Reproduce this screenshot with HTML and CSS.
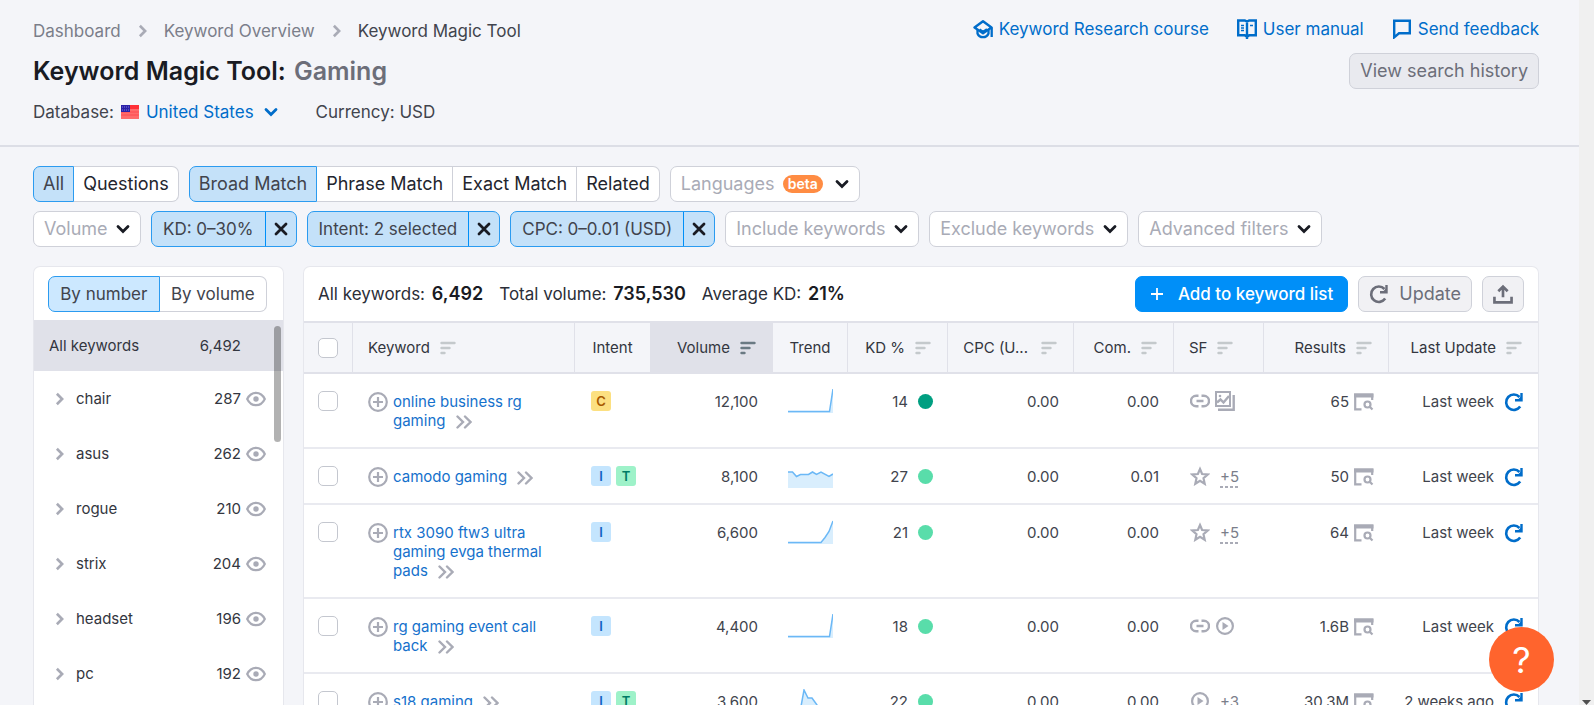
FILE: index.html
```html
<!DOCTYPE html>
<html lang="en">
<head>
<meta charset="utf-8">
<meta name="viewport" content="width=device-width, initial-scale=1">
<title>Keyword Magic Tool: Gaming</title>
<link rel="stylesheet" href="styles.css">
</head>
<body>
<svg class="sprite" aria-hidden="true">
  <symbol id="chev-right" viewBox="0 0 10 16"><path d="M2 2l6 6-6 6" fill="none" stroke="currentColor" stroke-width="3"/></symbol>
  <symbol id="chev-down" viewBox="0 0 14 10"><path d="M2 2.5l5 5 5-5" fill="none" stroke="currentColor" stroke-width="2.8" stroke-linecap="round"/></symbol>
  <symbol id="double" viewBox="0 0 16 14"><path d="M1.500 1.500L7 7l-5.500 5.500M9 1.500L14.500 7 9 12.500" fill="none" stroke="currentColor" stroke-width="2.400" stroke-linecap="round"/></symbol>
  <symbol id="close" viewBox="0 0 14 14"><path d="M2 2l10 10M12 2L2 12" stroke="currentColor" stroke-width="2.8" stroke-linecap="round"/></symbol>
  <symbol id="sort" viewBox="0 0 16 14"><path d="M1.500 2h13M1.500 7h8M1.500 12h3" stroke="currentColor" stroke-width="2.400" stroke-linecap="round"/></symbol>
  <symbol id="plus-circle" viewBox="0 0 20 20"><g fill="none" stroke="currentColor" stroke-width="2.200"><circle cx="10" cy="10" r="8.800"/><path d="M10 5v10M5 10h10"/></g></symbol>
  <symbol id="eye" viewBox="0 0 20 16"><path d="M1.200 8C3 4.200 6.200 1.800 10 1.800s7 2.400 8.800 6.200C17 11.800 13.800 14.200 10 14.200S3 11.800 1.200 8z" fill="none" stroke="currentColor" stroke-width="2.200"/><circle cx="10" cy="8" r="2.700" fill="currentColor"/></symbol>
  <symbol id="link" viewBox="0 0 20 14"><path d="M8.500 1.800H6.200a5.200 5.200 0 0 0 0 10.400h2.300M11.500 1.800h2.300a5.200 5.200 0 0 1 0 10.400h-2.300M6.500 7h7" fill="none" stroke="currentColor" stroke-width="2.400"/></symbol>
  <symbol id="images" viewBox="0 0 20 20"><path d="M0 0h16v16H0zM2 2v12h12V2z" fill="currentColor" fill-rule="evenodd"/><path d="M2 11.500l3.500-3 3 3L14 5" fill="none" stroke="currentColor" stroke-width="2.400"/><circle cx="5" cy="5" r="1.300" fill="currentColor"/><path d="M18.700 4v14.700H3" fill="none" stroke="currentColor" stroke-width="2.400"/></symbol>
  <symbol id="star" viewBox="0 0 20 20"><path d="M10 3l2.100 5 5.600.5-4.200 3.700 1.200 5.600-4.700-3-4.700 3 1.200-5.600-4.200-3.700 5.600-.5z" fill="none" stroke="currentColor" stroke-width="2.200"/></symbol>
  <symbol id="play" viewBox="0 0 20 20"><circle cx="10" cy="10" r="7.900" fill="none" stroke="currentColor" stroke-width="2.200"/><path d="M7.500 6v8l6-4z" fill="currentColor"/></symbol>
  <symbol id="serp" viewBox="0 0 20 18"><path d="M7.500 16.300H1.200V1.500h17V7" fill="none" stroke="currentColor" stroke-width="2.200"/><path d="M0 .5h19.500v4H0z" fill="currentColor"/><circle cx="13.500" cy="11.500" r="3" fill="none" stroke="currentColor" stroke-width="2.200"/><path d="M15.500 13.500l3 3" stroke="currentColor" stroke-width="2.200"/></symbol>
  <symbol id="refresh" viewBox="0 0 20 20"><path d="M16.200 14.600A7.700 7.700 0 1 1 15.500 5" fill="none" stroke="currentColor" stroke-width="2.600"/><path d="M17.500 1v7.200H11" fill="none" stroke="currentColor" stroke-width="2.400"/><path d="M18 3.500v4.500h-4.500z" fill="currentColor"/></symbol>
  <symbol id="cap" viewBox="0 0 20 20"><path d="M1.500 8.500L10 2.300l8.500 6.200L10 14.200z" fill="none" stroke="currentColor" stroke-width="2.400" stroke-linejoin="round"/><path d="M4.500 11v3.500C5.500 17 7.500 18.200 10 18.200s4.500-1.200 5.500-3.700V11M6.500 10.500L10 13l4-2.700M18.700 8.500V18" fill="none" stroke="currentColor" stroke-width="2.300"/></symbol>
  <symbol id="book" viewBox="0 0 20 20"><path d="M1.200 1.500h6.600L10 2.600l2.200-1.100h6.600v14.800h-6.600L10 18l-2.200-1.700H1.200zM10 2.500V20" fill="none" stroke="currentColor" stroke-width="2.400"/><path d="M4 6.500h3M4 9h3M4 11.500h3M13 6.500h3" stroke="currentColor" stroke-width="1.600"/></symbol>
  <symbol id="chat" viewBox="0 0 18 20"><path d="M1.200 1.700h15.600v12.600H6l-4.800 4z" fill="none" stroke="currentColor" stroke-width="2.400"/></symbol>
  <symbol id="export" viewBox="0 0 18 18"><path d="M9 12V2.500M4.800 6.500L9 2.300l4.200 4.200M1.300 11.500v5h15.400v-5" fill="none" stroke="currentColor" stroke-width="2.400"/></symbol>
</svg>

<div class="app">
<div class="page">
  <header class="header">
    <div class="header-main">
      <nav class="crumbs" aria-label="Breadcrumb">
        <a href="#">Dashboard</a>
        <svg class="i-crumb"><use href="#chev-right"/></svg>
        <a href="#">Keyword Overview</a>
        <svg class="i-crumb"><use href="#chev-right"/></svg>
        <span class="current">Keyword Magic Tool</span>
      </nav>
      <h1 class="title">Keyword Magic Tool: <span class="query">Gaming</span></h1>
      <div class="meta">
        <span class="database">Database:
          <svg class="flag" viewBox="0 0 18 14" aria-hidden="true"><path d="M0 0h18v14H0z" fill="#ff6b6b"/><path d="M0 0h18v4H0z" fill="#ff3038"/><path d="M0 7h18M0 10h18" stroke="#ff4a50"/><path d="M0 0h9v7H0z" fill="#2a20a8"/><path d="M1 2h7M1 5h7" stroke="#7f78d8" stroke-dasharray="1 1"/></svg>
          <button class="country" type="button">United States <svg class="i-down"><use href="#chev-down"/></svg></button>
        </span>
        <span>Currency: USD</span>
      </div>
    </div>
    <div class="header-side">
      <nav class="help-links" aria-label="Help">
        <a href="#"><svg class="i-20"><use href="#cap"/></svg>Keyword Research course</a>
        <a href="#"><svg class="i-20"><use href="#book"/></svg>User manual</a>
        <a href="#"><svg class="i-20"><use href="#chat"/></svg>Send feedback</a>
      </nav>
      <button class="btn history" type="button">View search history</button>
    </div>
  </header>

  <main class="content">
    <section class="filters" aria-label="Filters">
      <div class="filter-row">
        <div class="segmented"><button type="button" aria-pressed="true">All</button><button type="button" aria-pressed="false">Questions</button></div>
        <div class="segmented"><button type="button" aria-pressed="true">Broad Match</button><button type="button" aria-pressed="false">Phrase Match</button><button type="button" aria-pressed="false">Exact Match</button><button type="button" aria-pressed="false">Related</button></div>
        <label class="dropdown"><select aria-label="Languages"><option>Languages</option></select><span class="beta">beta</span><svg class="i-down"><use href="#chev-down"/></svg></label>
      </div>
      <div class="filter-row">
        <label class="dropdown"><select aria-label="Volume"><option>Volume</option></select><svg class="i-down"><use href="#chev-down"/></svg></label>
        <div class="chip"><button type="button">KD: 0–30%</button><button class="clear" type="button" aria-label="Clear KD"><svg class="i-14"><use href="#close"/></svg></button></div>
        <div class="chip"><button type="button">Intent: 2 selected</button><button class="clear" type="button" aria-label="Clear intent"><svg class="i-14"><use href="#close"/></svg></button></div>
        <div class="chip"><button type="button">CPC: 0–0.01 (USD)</button><button class="clear" type="button" aria-label="Clear CPC"><svg class="i-14"><use href="#close"/></svg></button></div>
        <label class="dropdown"><select aria-label="Include keywords"><option>Include keywords</option></select><svg class="i-down"><use href="#chev-down"/></svg></label>
        <label class="dropdown"><select aria-label="Exclude keywords"><option>Exclude keywords</option></select><svg class="i-down"><use href="#chev-down"/></svg></label>
        <label class="dropdown"><select aria-label="Advanced filters"><option>Advanced filters</option></select><svg class="i-down"><use href="#chev-down"/></svg></label>
      </div>
    </section>

    <div class="panels">
      <aside class="card groups">
        <div class="groups-head">
          <div class="segmented fill"><button type="button" aria-pressed="true">By number</button><button type="button" aria-pressed="false">By volume</button></div>
        </div>
        <a class="group all" href="#"><span class="name">All keywords</span><span>6,492</span></a>
        <ul class="group-list">
          <li class="group"><svg class="i-arrow"><use href="#chev-right"/></svg><a class="name" href="#">chair</a><span>287</span><svg class="i-eye"><use href="#eye"/></svg></li>
          <li class="group"><svg class="i-arrow"><use href="#chev-right"/></svg><a class="name" href="#">asus</a><span>262</span><svg class="i-eye"><use href="#eye"/></svg></li>
          <li class="group"><svg class="i-arrow"><use href="#chev-right"/></svg><a class="name" href="#">rogue</a><span>210</span><svg class="i-eye"><use href="#eye"/></svg></li>
          <li class="group"><svg class="i-arrow"><use href="#chev-right"/></svg><a class="name" href="#">strix</a><span>204</span><svg class="i-eye"><use href="#eye"/></svg></li>
          <li class="group"><svg class="i-arrow"><use href="#chev-right"/></svg><a class="name" href="#">headset</a><span>196</span><svg class="i-eye"><use href="#eye"/></svg></li>
          <li class="group"><svg class="i-arrow"><use href="#chev-right"/></svg><a class="name" href="#">pc</a><span>192</span><svg class="i-eye"><use href="#eye"/></svg></li>
        </ul>
        <div class="thumb"></div>
      </aside>

      <section class="card results">
        <div class="toolbar">
          <span>All keywords: <b>6,492</b></span>
          <span>Total volume: <b>735,530</b></span>
          <span>Average KD: <b>21%</b></span>
          <div class="actions">
            <button class="btn primary" type="button"><svg class="i-14" viewBox="0 0 14 14"><path d="M7 1v12M1 7h12" stroke="currentColor" stroke-width="1.800"/></svg>Add to keyword list</button>
            <button class="btn" type="button"><svg class="i-20"><use href="#refresh"/></svg>Update</button>
            <button class="btn" type="button" aria-label="Export"><svg class="i-20"><use href="#export"/></svg></button>
          </div>
        </div>
        <table class="grid">
          <colgroup><col class="c-check"><col><col class="c-75"><col class="c-123"><col class="c-75"><col class="c-100"><col class="c-126"><col class="c-100"><col class="c-90"><col class="c-125"><col class="c-last"></colgroup>
          <thead>
            <tr>
              <th class="check"><input type="checkbox" aria-label="Select all"></th>
              <th><span class="h">Keyword <svg class="i-sort"><use href="#sort"/></svg></span></th>
              <th class="center plain">Intent</th>
              <th class="sorted end"><span class="h">Volume <svg class="i-sort"><use href="#sort"/></svg></span></th>
              <th class="center">Trend</th>
              <th class="end"><span class="h">KD % <svg class="i-sort"><use href="#sort"/></svg></span></th>
              <th class="end"><span class="h">CPC (U... <svg class="i-sort wide"><use href="#sort"/></svg></span></th>
              <th class="end"><span class="h">Com. <svg class="i-sort"><use href="#sort"/></svg></span></th>
              <th><span class="h">SF <svg class="i-sort"><use href="#sort"/></svg></span></th>
              <th class="end"><span class="h">Results <svg class="i-sort"><use href="#sort"/></svg></span></th>
              <th class="end"><span class="h">Last Update <svg class="i-sort"><use href="#sort"/></svg></span></th>
            </tr>
          </thead>
          <tbody>
            <tr>
              <td class="check"><input type="checkbox" aria-label="Select online business rg gaming"></td>
              <td><div class="kw"><svg class="i-20"><use href="#plus-circle"/></svg><a href="#">online business rg gaming <svg class="i-double"><use href="#double"/></svg></a></div></td>
              <td class="icons"><span class="row"><b class="intent c">C</b></span></td>
              <td class="num">12,100</td>
              <td class="trend"><svg viewBox="0 0 45 24"><path class="area" d="M0 23h41.500L45 0v24H0z"/><path class="line" d="M0 22.500h41.500L45 0"/></svg></td>
              <td class="num"><span class="kd">14<i class="dot dark"></i></span></td>
              <td class="num">0.00</td><td class="num">0.00</td>
              <td class="icons"><span class="row"><svg class="i-link"><use href="#link"/></svg><svg class="i-20"><use href="#images"/></svg></span></td>
              <td class="num"><span class="res">65<svg class="i-serp"><use href="#serp"/></svg></span></td>
              <td class="num"><span class="upd">Last week<svg class="i-20"><use href="#refresh"/></svg></span></td>
            </tr>
            <tr>
              <td class="check"><input type="checkbox" aria-label="Select camodo gaming"></td>
              <td><div class="kw"><svg class="i-20"><use href="#plus-circle"/></svg><a href="#">camodo gaming <svg class="i-double"><use href="#double"/></svg></a></div></td>
              <td class="icons"><span class="row"><b class="intent i">I</b><b class="intent t">T</b></span></td>
              <td class="num">8,100</td>
              <td class="trend"><svg viewBox="0 0 45 24"><path class="area" d="M0 8h4.500L8.500 12.500l4-2h8L24.500 8l4 2.500L33 8l8 4.500 4-2.500v14H0z"/><path class="line" d="M0 8h4.500L8.500 12.500l4-2h8L24.500 8l4 2.500L33 8l8 4.500 4-2.500"/></svg></td>
              <td class="num"><span class="kd">27<i class="dot"></i></span></td>
              <td class="num">0.00</td><td class="num">0.01</td>
              <td class="icons"><span class="row"><svg class="i-20"><use href="#star"/></svg><a class="more" href="#">+5</a></span></td>
              <td class="num"><span class="res">50<svg class="i-serp"><use href="#serp"/></svg></span></td>
              <td class="num"><span class="upd">Last week<svg class="i-20"><use href="#refresh"/></svg></span></td>
            </tr>
            <tr>
              <td class="check"><input type="checkbox" aria-label="Select rtx 3090 ftw3 ultra gaming evga thermal pads"></td>
              <td><div class="kw"><svg class="i-20"><use href="#plus-circle"/></svg><a href="#">rtx 3090 ftw3 ultra gaming evga thermal pads <svg class="i-double"><use href="#double"/></svg></a></div></td>
              <td class="icons"><span class="row"><b class="intent i">I</b></span></td>
              <td class="num">6,600</td>
              <td class="trend"><svg viewBox="0 0 45 24"><path class="area" d="M0 23h33l4-5 4-6L45 1v23H0z"/><path class="line" d="M0 22.500h33l4-5 4-6L45 1"/></svg></td>
              <td class="num"><span class="kd">21<i class="dot"></i></span></td>
              <td class="num">0.00</td><td class="num">0.00</td>
              <td class="icons"><span class="row"><svg class="i-20"><use href="#star"/></svg><a class="more" href="#">+5</a></span></td>
              <td class="num"><span class="res">64<svg class="i-serp"><use href="#serp"/></svg></span></td>
              <td class="num"><span class="upd">Last week<svg class="i-20"><use href="#refresh"/></svg></span></td>
            </tr>
            <tr>
              <td class="check"><input type="checkbox" aria-label="Select rg gaming event call back"></td>
              <td><div class="kw"><svg class="i-20"><use href="#plus-circle"/></svg><a href="#">rg gaming event call back <svg class="i-double"><use href="#double"/></svg></a></div></td>
              <td class="icons"><span class="row"><b class="intent i">I</b></span></td>
              <td class="num">4,400</td>
              <td class="trend"><svg viewBox="0 0 45 24"><path class="area" d="M0 23h41.500L45 0v24H0z"/><path class="line" d="M0 22.500h41.500L45 0"/></svg></td>
              <td class="num"><span class="kd">18<i class="dot"></i></span></td>
              <td class="num">0.00</td><td class="num">0.00</td>
              <td class="icons"><span class="row"><svg class="i-link"><use href="#link"/></svg><svg class="i-20"><use href="#play"/></svg></span></td>
              <td class="num"><span class="res">1.6B<svg class="i-serp"><use href="#serp"/></svg></span></td>
              <td class="num"><span class="upd">Last week<svg class="i-20"><use href="#refresh"/></svg></span></td>
            </tr>
            <tr>
              <td class="check"><input type="checkbox" aria-label="Select s18 gaming"></td>
              <td><div class="kw"><svg class="i-20"><use href="#plus-circle"/></svg><a href="#">s18 gaming <svg class="i-double"><use href="#double"/></svg></a></div></td>
              <td class="icons"><span class="row"><b class="intent i">I</b><b class="intent t">T</b></span></td>
              <td class="num">3,600</td>
              <td class="trend"><svg viewBox="0 0 45 24"><path class="area" d="M12 23L16 1l4 8h4l5 7 4 5 12 2v1H0v-1z"/><path class="line" d="M0 23h12L16 1l4 8h4l5 7 4 5 12 2"/></svg></td>
              <td class="num"><span class="kd">22<i class="dot"></i></span></td>
              <td class="num">0.00</td><td class="num">0.00</td>
              <td class="icons"><span class="row"><svg class="i-20"><use href="#play"/></svg><a class="more" href="#">+3</a></span></td>
              <td class="num"><span class="res">30.3M<svg class="i-serp"><use href="#serp"/></svg></span></td>
              <td class="num"><span class="upd">2 weeks ago<svg class="i-20"><use href="#refresh"/></svg></span></td>
            </tr>
          </tbody>
        </table>
      </section>
    </div>
  </main>
</div>
<div class="scrollbar" aria-hidden="true"><svg viewBox="0 0 9 5"><path d="M0 0h9L4.500 5z" fill="#505050"/></svg></div>
<button class="help" type="button" aria-label="Help">?</button>
</div>
</body>
</html>
```

FILE: styles.css
```css
* { box-sizing: border-box; }

body {
  margin: 0;
  background: #f4f5f9;
  color: #41444d;
  font: 400 17px/24px Inter, "Liberation Sans", sans-serif;
}

a { color: inherit; text-decoration: none; }
button, select, input { font: inherit; color: inherit; margin: 0; }
button { cursor: pointer; white-space: nowrap; }
svg { flex: none; display: block; }

.sprite { position: absolute; width: 0; height: 0; }
.i-20 { width: 20px; height: 20px; }
.i-14 { width: 14px; height: 14px; }
.i-down { width: 14px; height: 10px; }
.i-crumb { width: 9px; height: 14px; color: #a9abb6; }
.i-arrow { width: 9px; height: 14px; color: #a9abb6; }
.i-eye { width: 20px; height: 16px; color: #a9abb6; }
.i-link { width: 20px; height: 14px; }
.i-serp { width: 20px; height: 18px; color: #a9abb6; }
.i-sort { width: 16px; height: 14px; color: #c4c9cc; }
.i-double { display: inline-block; width: 16px; height: 14px; margin-left: 6px; vertical-align: -3px; color: #a9abb6; }

.app {
  display: grid;
  grid-template-columns: minmax(0, 1fr) 15px;
  height: 100vh;
  overflow: hidden;
}
.page { display: flex; flex-direction: column; min-height: 0; overflow: hidden; }
.scrollbar {
  display: flex;
  align-items: flex-end;
  justify-content: center;
  background: #f0f0f0;
}
.scrollbar svg { width: 9px; height: 5px; }

/* Header */
.header {
  display: flex;
  justify-content: space-between;
  padding: 17px 40px 21px 33px;
  border-bottom: 2px solid #dcdee6;
}
.crumbs { display: flex; align-items: center; gap: 17px; height: 28px; color: #7b7e8a; }
.crumbs .current { color: #41444d; }
.title { margin: 8px 0 11px; color: #191b23; font-size: 25px; font-weight: 600; line-height: 36px; }
.query { margin-left: 2px; color: #6c6e79; }
.meta { display: flex; gap: 38px; line-height: 24px; }
.database { display: flex; align-items: center; gap: 7px; }
.flag { width: 18px; height: 14px; }
.country {
  display: flex;
  align-items: center;
  gap: 10px;
  padding: 0;
  border: 0;
  background: none;
  color: #006dca;
}
.header-side { display: flex; flex-direction: column; align-items: flex-end; gap: 12px; }
.help-links { display: flex; gap: 28px; color: #006dca; }
.help-links a { display: flex; align-items: center; gap: 6px; }

.btn {
  display: flex;
  align-items: center;
  gap: 10px;
  height: 36px;
  padding: 0 10px;
  border: 1px solid #cfd1d9;
  border-radius: 7px;
  background: #f1f1f4;
  color: #6c6e79;
  font-size: 18px;
}
.btn.history { background: #e9eaef; }
.btn.primary {
  padding: 0 14px;
  gap: 14px;
  border-color: #008ff8;
  background: #008ff8;
  color: #fff;
  font-size: 17px;
  font-weight: 500;
}

/* Filters */
.content { display: flex; flex: 1; flex-direction: column; gap: 19px; min-height: 0; padding: 19px 40px 0 33px; }
.filters { display: grid; gap: 9px; }
.filter-row { display: flex; gap: 10px; }

.segmented { display: flex; height: 36px; font-size: 18px; }
.segmented button {
  padding: 0 9px;
  border: 1px solid #cfd1d9;
  border-left-width: 0;
  background: #fff;
  color: #23252e;
}
.segmented button:first-child { border-left-width: 1px; border-radius: 7px 0 0 7px; }
.segmented button:last-child { border-radius: 0 7px 7px 0; }
.segmented button[aria-pressed="true"] { border-color: #2b9bf0; background: #c4e1f9; color: #41444d; }
.segmented.fill button { flex: 1 1 auto; padding: 0 5px; color: #41444d; }
.segmented.fill button[aria-pressed="true"] { background: #cce8ff; }

.dropdown {
  display: flex;
  align-items: center;
  gap: 8px;
  height: 36px;
  padding: 0 10px;
  border: 1px solid #cfd1d9;
  border-radius: 7px;
  background: #fff;
  color: #191b23;
  font-size: 18px;
}
.dropdown select { appearance: none; padding: 0; border: 0; background: none; color: #a9abb6; }
.beta {
  margin-right: 4px;
  padding: 0 5px;
  border-radius: 9px;
  background: #ff8c43;
  color: #fff;
  font-size: 14px;
  font-weight: 600;
  line-height: 18px;
}

.chip { display: flex; height: 36px; border: 1px solid #2b9bf0; border-radius: 7px; background: #c4e1f9; }
.chip button { padding: 0 11px; border: 0; background: none; }
.chip .clear { display: flex; align-items: center; padding: 0 8px; border-left: 1px solid #008ff8; color: #191b23; }

/* Panels */
.panels { display: flex; flex: 1; gap: 19px; min-height: 0; }
.card { border: 1px solid #e6e7ed; border-bottom: 0; border-radius: 7px 7px 0 0; background: #fff; }

.groups { position: relative; flex: 0 0 251px; font-size: 15px; line-height: 20px; color: #333640; }
.groups-head { padding: 9px 16px 8px 14px; }
.groups-head .segmented { font-size: 17px; }
.group { display: flex; align-items: center; gap: 5px; height: 55px; padding: 0 17px 0 21px; }
.group .name { flex: 1; }
.group .i-arrow { margin-right: 7px; }
.group.all { height: 51px; padding: 0 42px 0 15px; background: #e0e1e9; }
.group-list { margin: 0; padding: 0; list-style: none; }
.thumb {
  position: absolute;
  top: 59px;
  right: 2px;
  width: 7px;
  height: 116px;
  border-radius: 4px;
  background: rgba(0, 0, 0, .3);
}

.results { flex: 1; min-width: 0; overflow: hidden; }
.toolbar { display: flex; align-items: center; gap: 16px; padding: 9px 14px; color: #2b2e38; white-space: nowrap; }
.toolbar b { margin-left: 2px; color: #191b23; font-size: 18px; font-weight: 600; }
.actions { display: flex; gap: 10px; margin-left: auto; }

/* Keyword table */
.grid { width: 100%; table-layout: fixed; border-collapse: separate; border-spacing: 0; font-size: 15px; line-height: 19px; }
.c-check { width: 49px; }
.c-75 { width: 75px; }
.c-90 { width: 90px; }
.c-100 { width: 100px; }
.c-123 { width: 123px; }
.c-125 { width: 125px; }
.c-126 { width: 126px; }
.c-last { width: 149px; }

.grid th {
  height: 53px;
  padding: 0 16px 0 15px;
  border: solid #e0e1e9;
  border-width: 2px 1px 2px 0;
  background: #f4f5f9;
  color: #333640;
  font-weight: 400;
  text-align: left;
}
.grid th:last-child { border-right: 0; }
.grid th.center { padding: 0; text-align: center; }
.grid th.plain { border-right: 0; }
.grid th.sorted { background: #e0e1e9; }
.sorted .i-sort { color: #6a7a83; }
.h { display: flex; align-items: center; gap: 10px; }
.end .h { justify-content: flex-end; }
.h .wide { margin-left: 3px; }

.grid td { padding: 18px 15px; border-bottom: 2px solid #e9eaf0; vertical-align: top; }
.grid tbody td { padding-bottom: 17px; }
.grid .check { padding: 0 0 0 14px; }
.grid td.check { padding-top: 17px; }
.check input {
  display: block;
  appearance: none;
  width: 20px;
  height: 20px;
  border: 1px solid #c4c7cf;
  border-radius: 5px;
  background: #fff;
}
.kw { display: flex; gap: 5px; color: #1571cc; }
.kw .i-20 { height: 20px; margin-bottom: -1px; color: #a9abb6; }
.num { text-align: right; }
.grid tbody td.icons { padding: 17px 0 0 16px; }
.row { display: flex; align-items: center; gap: 5px; height: 20px; color: #a9abb6; }
.intent { width: 20px; border-radius: 3px; font-size: 13px; font-weight: 600; line-height: 20px; text-align: center; }
.intent.c { background: #fce081; color: #a75800; }
.intent.i { background: #c4e5fe; color: #1063c4; }
.intent.t { background: #9ef2c9; color: #007c65; }
.grid tbody td.trend { padding: 15px 0 0 15px; }
.trend svg { width: 45px; height: 24px; }
.area { fill: #d9eefd; }
.line { fill: none; stroke: #6bb8f6; stroke-width: 1.5px; }
.kd, .res, .upd { display: flex; align-items: center; justify-content: flex-end; height: 19px; white-space: nowrap; }
.kd { gap: 10px; }
.dot { width: 15px; height: 15px; border-radius: 50%; background: #59ddaa; }
.dot.dark { background: #009f81; }
.res { gap: 5px; }
.upd { gap: 10px; }
.upd svg { color: #006dca; }
.grid td.num:nth-child(n + 10) { padding-left: 0; }
.grid td.num:last-child { padding-right: 14px; }
.more {
  margin: 2px 0 0 5px;
  background: repeating-linear-gradient(to right, #a9abb6 0 3px, transparent 3px 5px) bottom / 100% 2px no-repeat;
  color: #7b7e8a;
  line-height: 22px;
}

.help {
  position: fixed;
  right: 40px;
  bottom: 13px;
  width: 65px;
  height: 65px;
  padding: 0;
  border: 0;
  border-radius: 50%;
  background: #ff642d;
  color: #fff;
  font-size: 36px;
  font-weight: 400;
}
```
